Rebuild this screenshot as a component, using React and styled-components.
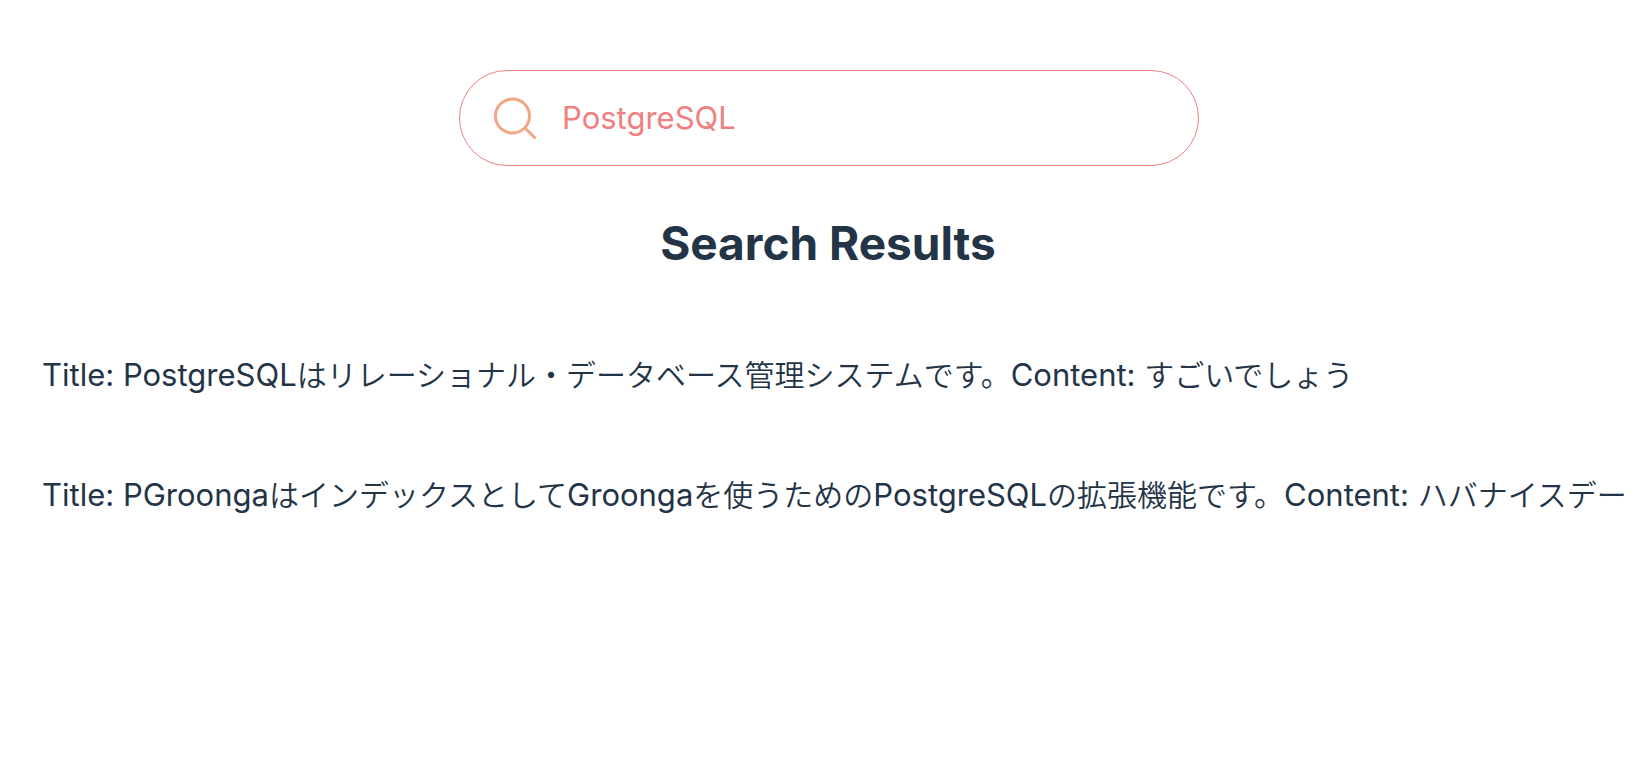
import React, { useState } from "react";
import styled, { createGlobalStyle } from "styled-components";

const GlobalStyle = createGlobalStyle`
  * { box-sizing: border-box; }
  body {
    margin: 0;
    background: #fff;
    color: #243447;
    font-family: Inter, "Noto Sans CJK JP", sans-serif;
  }
`;

const Page = styled.main`
  display: flex;
  flex-direction: column;
  align-items: center;
  padding: 70px 10px 0;
`;

const SearchBox = styled.label`
  display: flex;
  align-items: center;
  gap: 24px;
  width: 740px;
  max-width: 100%;
  height: 96px;
  margin-left: 10px;
  padding: 0 34px;
  border: 1px solid #f08080;
  border-radius: 48px;
`;

const SearchInput = styled.input`
  flex: 1;
  min-width: 0;
  height: 40px;
  padding: 0;
  border: 0;
  outline: 0;
  background: transparent;
  color: #f08080;
  font: 400 31px/40px Inter, "Noto Sans CJK JP", sans-serif;
`;

const Heading = styled.h1`
  margin: 47px 0 0 8px;
  font-size: 46px;
  line-height: 60px;
  font-weight: 700;
`;

const Results = styled.ul`
  align-self: stretch;
  margin: 78px 0 0;
  padding: 0 0 0 32px;
  list-style: none;
`;

const Result = styled.li`
  margin-bottom: 72px;
  font-size: 31px;
  line-height: 48px;
  font-weight: 400;
  white-space: nowrap;
`;

const Japanese = styled.span`
  font-family: "Noto Sans CJK JP", sans-serif;
  font-size: 30px;
  line-height: 40px;
  font-weight: 350;
`;

const results = [
  { title: "PostgreSQLはリレーショナル・データベース管理システムです。", content: "すごいでしょう" },
  { title: "PGroongaはインデックスとしてGroongaを使うためのPostgreSQLの拡張機能です。", content: "ハバナイスデー" },
];

// Japanese runs get a lighter face than the Latin words around them.
function MixedText({ children }) {
  return children
    .split(/([\u3000-\u9fff]+)/)
    .filter(Boolean)
    .map((run, i) => (/[\u3000-\u9fff]/.test(run) ? <Japanese key={i} lang="ja">{run}</Japanese> : run));
}

export default function App() {
  const [query, setQuery] = useState("PostgreSQL");
  return (
    <Page>
      <GlobalStyle />
      <SearchBox>
        <svg width="44" height="44" viewBox="0 0 44 44" fill="none" stroke="#f4a582" strokeWidth="3" aria-hidden="true">
          <circle cx="18.5" cy="20" r="17" />
          <path d="M30.5 31.5L41.5 42.5" />
        </svg>
        <SearchInput type="text" aria-label="Search" value={query} onChange={(e) => setQuery(e.target.value)} />
      </SearchBox>
      <Heading>Search Results</Heading>
      <Results>
        {results.map((r) => (
          <Result key={r.title}>
            <MixedText>{`Title: ${r.title}Content: ${r.content}`}</MixedText>
          </Result>
        ))}
      </Results>
    </Page>
  );
}
